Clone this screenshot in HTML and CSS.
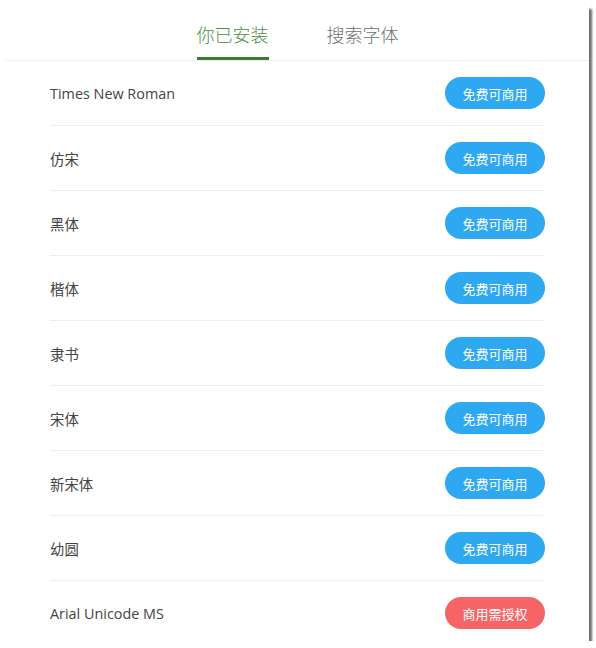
FILE: index.html
```html
<!DOCTYPE html>
<html lang="zh-CN">
<head>
<meta charset="utf-8">
<title>字体</title>
<link rel="stylesheet" href="styles.css">
</head>
<body>
<div class="card">
  <div class="tabs">
    <div class="tab active">你已安装</div>
    <div class="tab">搜索字体</div>
  </div>
  <ul class="list">
    <li class="row"><span class="name">Times New Roman</span><span class="badge free">免费可商用</span></li>
    <li class="row"><span class="name">仿宋</span><span class="badge free">免费可商用</span></li>
    <li class="row"><span class="name">黑体</span><span class="badge free">免费可商用</span></li>
    <li class="row"><span class="name">楷体</span><span class="badge free">免费可商用</span></li>
    <li class="row"><span class="name">隶书</span><span class="badge free">免费可商用</span></li>
    <li class="row"><span class="name">宋体</span><span class="badge free">免费可商用</span></li>
    <li class="row"><span class="name">新宋体</span><span class="badge free">免费可商用</span></li>
    <li class="row"><span class="name">幼圆</span><span class="badge free">免费可商用</span></li>
    <li class="row"><span class="name">Arial Unicode MS</span><span class="badge paid">商用需授权</span></li>
  </ul>
</div>
</body>
</html>
```
FILE: styles.css
```css
html, body {
  margin: 0;
  padding: 0;
  background: #ffffff;
}
body {
  padding: 6px 0 0 6px;
  font-family: "Open Sans", "Noto Sans CJK SC", sans-serif;
  color: #333;
}
.card {
  width: 583px;
  height: 635px;
  background: #fff;
  box-shadow: 3px 3px 2px rgba(60, 60, 60, 0.75);
  overflow: hidden;
  box-sizing: border-box;
}
.tabs {
  display: flex;
  justify-content: center;
  gap: 58px;
  height: 55px;
  border-bottom: 1px solid #eeeeee;
  box-sizing: border-box;
}
.tab {
  font-family: "Noto Sans CJK SC", sans-serif;
  font-size: 18px;
  font-weight: 300;
  color: #707070;
  padding-top: 15px;
  box-sizing: border-box;
  height: 54px;
  line-height: 26px;
  width: 72px;
  text-align: center;
}
.tab.active {
  color: #4f8d3f;
  border-bottom: 3px solid #3f7b30;
}
.list {
  list-style: none;
  margin: 0;
  padding: 0 44px;
}
.row {
  display: flex;
  align-items: center;
  justify-content: space-between;
  height: 64px;
  border-bottom: 1px solid #eeeeee;
}
.name {
  font-size: 14.4px;
  color: #444;
}
.badge {
  width: 100px;
  height: 32px;
  border-radius: 16px;
  display: flex;
  align-items: center;
  justify-content: center;
  font-family: "Noto Sans CJK SC", sans-serif;
  font-size: 13px;
  color: #fff;
}
.badge.free {
  background: #2ea8f0;
}
.badge.paid {
  background: #f56565;
}
```
